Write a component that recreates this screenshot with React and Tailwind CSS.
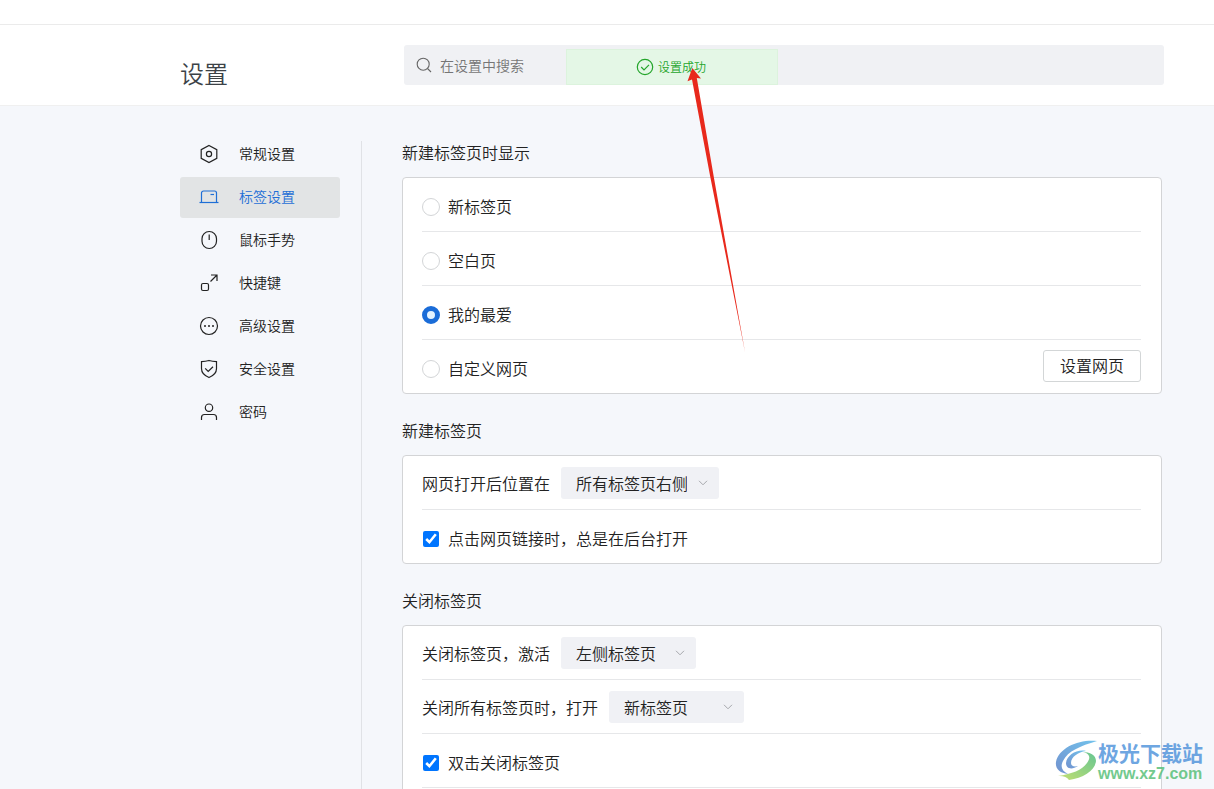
import { useState } from "react";

const navItems = [
  { id: "general", label: "常规设置" },
  { id: "tabs", label: "标签设置" },
  { id: "mouse", label: "鼠标手势" },
  { id: "shortcut", label: "快捷键" },
  { id: "advanced", label: "高级设置" },
  { id: "security", label: "安全设置" },
  { id: "password", label: "密码" },
];

const newTabOptions = ["新标签页", "空白页", "我的最爱", "自定义网页"];

const iconPaths = {
  general: (
    <>
      <path d="M10 1.500l7.800 4.200v8.600L10 18.500l-7.800-4.200V5.700z" />
      <circle cx="10" cy="10" r="2.600" />
    </>
  ),
  tabs: (
    <>
      <path d="M.5 15.500h19" />
      <path d="M2.500 15.500v-9.500a2 2 0 0 1 2-2h11a2 2 0 0 1 2 2v9.500" />
      <path d="M11.500 7.500h3.500" />
    </>
  ),
  mouse: (
    <>
      <rect x="3" y="1.500" width="14.500" height="17" rx="7.200" />
      <path d="M10.200 4.500v5.500" />
    </>
  ),
  shortcut: (
    <>
      <rect x="2.500" y="10.500" width="7" height="7" rx="1.500" />
      <path d="M11.500 8.500l6.500-6.500M12 2h6v6" />
    </>
  ),
  advanced: (
    <>
      <circle cx="10" cy="10" r="8.500" />
      <path d="M5 10h2M9 10h2M13 10h2" strokeWidth="1.600" />
    </>
  ),
  security: (
    <>
      <path d="M10 1.500c2.500.8 5 1.100 7.500 1.100v7c0 4.500-3.500 7.400-7.500 8.900-4-1.500-7.500-4.400-7.500-8.900v-7c2.500 0 5-.3 7.500-1.100z" />
      <path d="M6.200 9.300l3 3.200 4.800-4.700" />
    </>
  ),
  password: (
    <>
      <circle cx="10" cy="5.700" r="3.700" />
      <path d="M2.500 18v-2.500a3 3 0 0 1 3-3h9a3 3 0 0 1 3 3V18" />
    </>
  ),
};

function NavIcon({ id }) {
  return (
    <svg width="20" height="20" viewBox="0 0 20 20" fill="none" stroke="currentColor" strokeWidth="1.200" className="shrink-0">
      {iconPaths[id]}
    </svg>
  );
}

function Section({ title, children }) {
  return (
    <section>
      <h2 className="mb-3.5 text-base leading-[22px]">{title}</h2>
      <div className="rounded-sm border border-[#d3d4d6] bg-white pl-[19px] pr-5">{children}</div>
    </section>
  );
}

function Row({ children }) {
  return (
    <div className="flex h-[54px] items-center border-b border-[#e6e7e9] last:h-[53px] last:border-b-0">
      {children}
    </div>
  );
}

function SelectRow({ id, label, options, width }) {
  return (
    <Row>
      <label htmlFor={id}>{label}</label>
      <div className="relative ml-[11px]">
        <select id={id} className={`h-8 appearance-none rounded-[3px] bg-[#f0f1f5] pl-[15px] pr-8 ${width}`}>
          {options.map((option) => (
            <option key={option}>{option}</option>
          ))}
        </select>
        <svg width="10" height="6" viewBox="0 0 10 6" fill="none" stroke="#a6a8ac" className="pointer-events-none absolute right-[11px] top-[13px]">
          <path d="M1 .8l4 4 4-4" />
        </svg>
      </div>
    </Row>
  );
}

function CheckRow({ label }) {
  return (
    <Row>
      <label className="flex items-center gap-2 pt-1">
        <input type="checkbox" defaultChecked className="mx-px size-4 accent-[#0075ff]" />
        <span className="pb-0.5">{label}</span>
      </label>
    </Row>
  );
}

export default function App() {
  const [newTab, setNewTab] = useState("我的最爱");

  return (
    <div className="relative flex h-screen flex-col overflow-hidden bg-[#f5f7fb] font-['Noto_Sans_CJK_SC',sans-serif] font-[350] text-[#222]">
      <div className="h-[25px] shrink-0 border-b border-[#ebebeb] bg-white" />

      {/* Header */}
      <header className="shrink-0 border-b border-[#f0f0f0] bg-white pl-[180px] pr-[50px]">
        <div className="relative flex h-20 items-center">
          <h1 className="w-56 shrink-0 pt-4 text-2xl text-[#3c4247]">设置</h1>
          <label className="flex h-10 flex-1 items-center gap-2 rounded-[3px] bg-[#f0f1f4] px-3">
            <svg width="16" height="16" viewBox="0 0 16 16" fill="none" stroke="#666" strokeWidth="1.100">
              <circle cx="7.200" cy="7.200" r="6" />
              <path d="M11.500 11.500l3.500 3.500" />
            </svg>
            <input
              type="search"
              aria-label="在设置中搜索"
              placeholder="在设置中搜索"
              className="flex-1 bg-transparent text-sm outline-none placeholder:text-[#757575]"
            />
          </label>

          {/* Toast */}
          <div role="status" className="absolute left-1/2 top-6 flex h-9 w-[212px] -translate-x-1/2 items-center justify-center gap-1 border border-[#dcf3dd] bg-[#e4f7e6] pr-0.5 text-xs text-[#24a52b]">
            <svg width="18" height="18" viewBox="0 0 18 18" fill="none" stroke="currentColor" strokeWidth="1.200">
              <circle cx="9" cy="9" r="7.700" />
              <path d="M5.200 9l2.800 2.800 5-5" />
            </svg>
            设置成功
          </div>
        </div>
      </header>

      <div className="flex flex-1 pl-[180px] pr-[52px]">
        {/* Sidebar */}
        <nav className="mr-[21px] flex w-40 shrink-0 flex-col gap-0.5 pt-7">
          {navItems.map(({ id, label }) => (
            <a
              key={id}
              href={`#${id}`}
              className={`flex h-[41px] items-center gap-5 rounded-[3px] pb-0.5 pl-[19px] text-sm ${
                id === "tabs" ? "bg-[#e2e4e5] text-[#1f6fd6]" : ""
              }`}
            >
              <NavIcon id={id} />
              <span className="pb-0.5">{label}</span>
            </a>
          ))}
        </nav>

        {/* Settings */}
        <main className="mt-[35px] flex flex-1 flex-col gap-[25px] border-l border-[#e0e2e6] pl-10">
          <Section title="新建标签页时显示">
            {newTabOptions.map((option) => (
              <Row key={option}>
                <label className="flex items-center gap-2 pt-1">
                  <input
                    type="radio"
                    name="newTab"
                    checked={newTab === option}
                    onChange={() => setNewTab(option)}
                    className="size-[18px] appearance-none rounded-full border border-[#d3d5d7] bg-white checked:border-[5px] checked:border-[#1a6cd8] checked:bg-[#e3f2ff]"
                  />
                  <span className="pb-0.5">{option}</span>
                </label>
                {option === "自定义网页" && (
                  <button type="button" className="mb-0.5 ml-auto h-8 rounded-[3px] border border-[#d3d6d7] px-4 pb-0.5">
                    设置网页
                  </button>
                )}
              </Row>
            ))}
          </Section>

          <Section title="新建标签页">
            <SelectRow id="openPosition" label="网页打开后位置在" options={["所有标签页右侧"]} width="w-[158px]" />
            <CheckRow label="点击网页链接时，总是在后台打开" />
          </Section>

          <Section title="关闭标签页">
            <SelectRow id="closeActivate" label="关闭标签页，激活" options={["左侧标签页", "右侧标签页"]} width="w-[135px]" />
            <SelectRow id="closeAll" label="关闭所有标签页时，打开" options={["新标签页", "空白页"]} width="w-[135px]" />
            <CheckRow label="双击关闭标签页" />
            <Row />
          </Section>
        </main>
      </div>

      {/* Pointer arrow */}
      <svg width="60" height="286" viewBox="0 0 60 286" className="pointer-events-none absolute left-[686px] top-[67px]">
        <path d="M6.300 1L15 11.500l-4.200-.6L27.800 110 59 285 24.300 110 6 12.500l-4.500 1.700z" fill="#e8291c" />
      </svg>

      {/* Watermark */}
      <div className="pointer-events-none absolute bottom-1.5 right-[11px] flex items-center opacity-80">
        <svg width="43" height="42" viewBox="0 0 43 42">
          <defs>
            <linearGradient id="leaf" x1="0" y1="1" x2="1" y2="0">
              <stop offset="0" stopColor="#4f78c4" />
              <stop offset="1" stopColor="#4fb4e8" />
            </linearGradient>
            <linearGradient id="wave" x1="0" y1="1" x2="1" y2="0">
              <stop offset="0" stopColor="#b5d84e" />
              <stop offset="1" stopColor="#41b878" />
            </linearGradient>
          </defs>
          <path d="M42 1C25-1 4 7 1 22c-1 7 4 11 12 12-6-3-8-7-5-13C13 11 25 6 42 1z" fill="url(#leaf)" />
          <path d="M31 11c-9-2-19 4-20 12 0 6 6 7 12 3-4 1-7 0-7-3 0-6 7-11 15-12z" fill="url(#leaf)" />
          <path d="M27 12c8 1 9 6 5 11-5 7-15 11-29 13 5-.5 9 1 11 4 14-2 26-9 27-19 0-6-6-9-14-9z" fill="url(#wave)" />
        </svg>
        <div>
          <div className="text-[21px] font-bold leading-[26px] text-[#4a90da]">极光下载站</div>
          <div className="font-['Liberation_Sans',sans-serif] text-base font-bold leading-[18px] text-[#50bd72]">www.xz7.com</div>
        </div>
      </div>
    </div>
  );
}
